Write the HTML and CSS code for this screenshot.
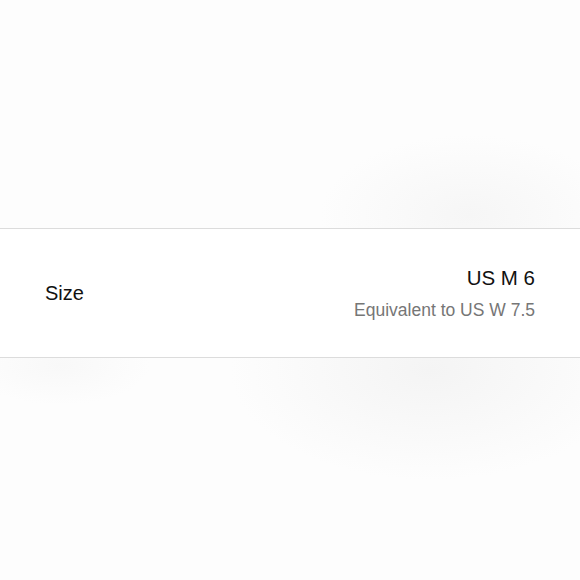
FILE: index.html
```html
<!DOCTYPE html>
<html lang="en">
<head>
<meta charset="utf-8">
<title>Size</title>
<link rel="stylesheet" href="styles.css">
</head>
<body>
<div class="page">
  <div class="spacer-top"></div>
  <div class="row">
    <div class="label">Size</div>
    <div class="value">
      <div class="primary">US M 6</div>
      <div class="secondary">Equivalent to US W 7.5</div>
    </div>
  </div>
</div>
</body>
</html>
```

FILE: styles.css
```css
html, body {
  margin: 0;
  padding: 0;
}
body {
  width: 580px;
  height: 580px;
  overflow: hidden;
  font-family: "Liberation Sans", Arial, sans-serif;
  background-color: #fdfdfd;
  background-image:
    radial-gradient(ellipse 150px 80px at 470px 215px, #f6f6f6 0%, rgba(253,253,253,0) 100%),
    radial-gradient(ellipse 200px 110px at 430px 370px, #f4f4f4 0%, rgba(253,253,253,0) 100%),
    radial-gradient(ellipse 90px 40px at 60px 365px, #f8f8f8 0%, rgba(253,253,253,0) 100%);
  background-repeat: no-repeat;
}
.page {
  display: flex;
  flex-direction: column;
}
.spacer-top {
  height: 228px;
}
.row {
  display: flex;
  justify-content: space-between;
  align-items: center;
  height: 128px;
  padding: 0 45px;
  background: #ffffff;
  border-top: 1px solid #dcdcdc;
  border-bottom: 1px solid #dcdcdc;
  color: #111111;
}
.label {
  font-size: 20px;
  line-height: 28px;
}
.value {
  display: flex;
  flex-direction: column;
  align-items: flex-end;
  padding-top: 2px;
}
.primary {
  font-size: 20.5px;
  line-height: 28px;
}
.secondary {
  font-size: 17.5px;
  line-height: 28px;
  margin-top: 4px;
  color: #767676;
}
```
